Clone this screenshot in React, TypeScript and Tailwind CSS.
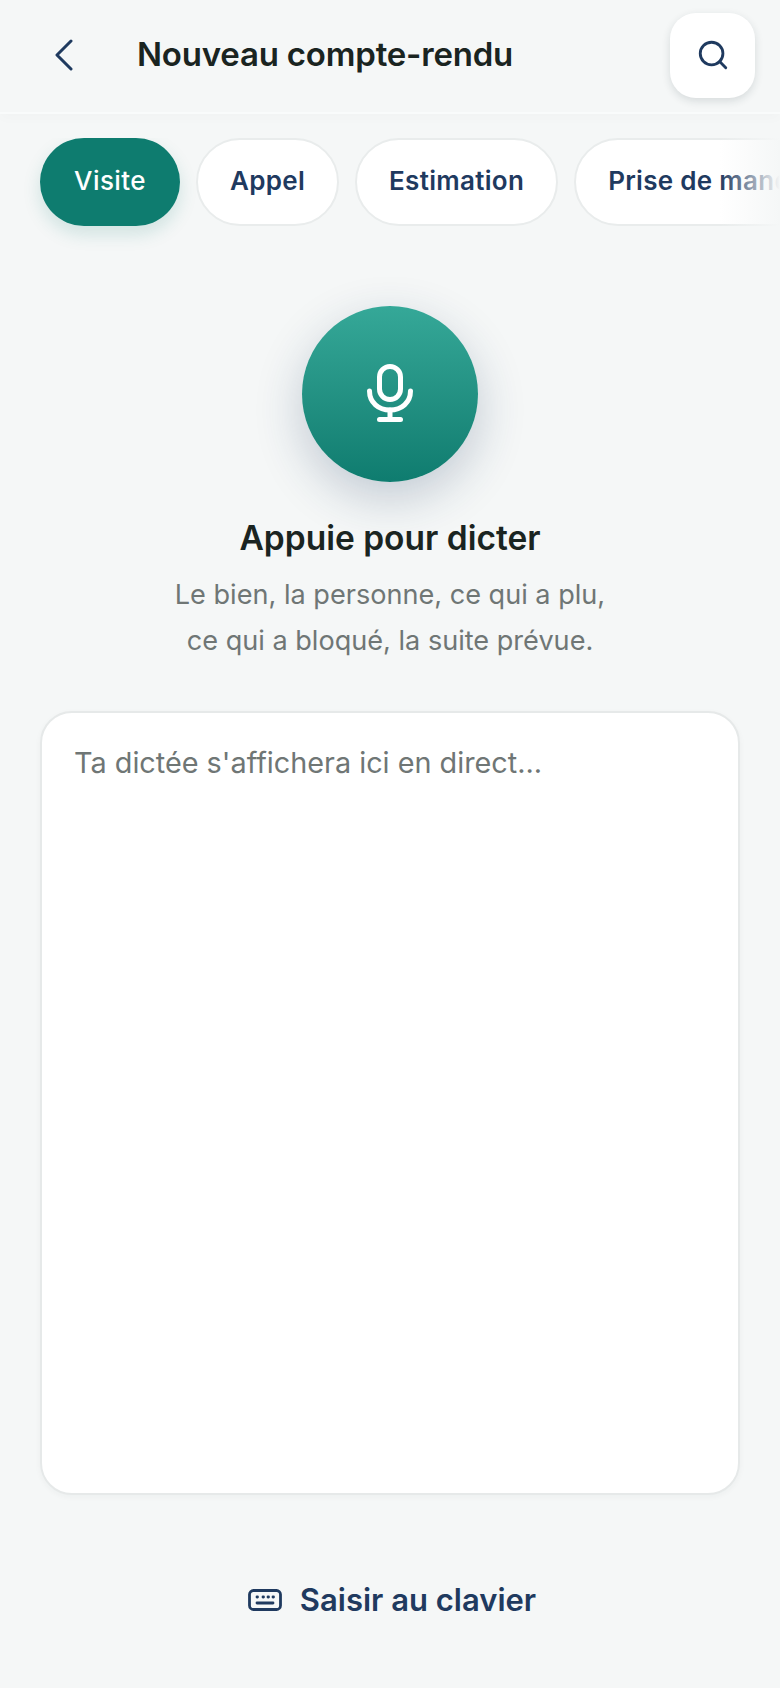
import { Search } from "lucide-react";

const chips = ["Visite", "Appel", "Estimation", "Prise de mandat"];

function BackIcon() {
  return (
    <svg width="20" height="32" viewBox="0 0 20 32" fill="none" stroke="#1f3a5f" strokeWidth="3" strokeLinecap="round" strokeLinejoin="round">
      <path d="M17 2 3 16l14 14" />
    </svg>
  );
}

function MicIcon() {
  return (
    <svg width="46" height="58" viewBox="0 0 46 58" fill="none" stroke="white" strokeWidth="5" strokeLinecap="round" strokeLinejoin="round">
      <rect x="12.500" y="2.500" width="21" height="33" rx="10.500" />
      <path d="M2.500 27c0 11.500 9 19 20.500 19s20.500-7.500 20.500-19" />
      <path d="M23 46v9" />
      <path d="M12.500 55.500h21" />
    </svg>
  );
}

function KeyboardIcon() {
  return (
    <svg width="34" height="22" viewBox="0 0 34 22" fill="none" stroke="#1f3a5f" strokeWidth="2.8" strokeLinecap="round">
      <rect x="1.500" y="1.500" width="31" height="19" rx="4" />
      <path d="M9 8h.5M15 8h.5M20 8h.5M25 8h.5" />
      <path d="M9 14h16" />
    </svg>
  );
}

export default function App() {
  return (
    <div className="flex h-[1688px] w-[780px] flex-col overflow-hidden bg-[#f5f7f7] font-['Inter',sans-serif]">
      <header className="flex h-[114px] shrink-0 items-center border-b-2 border-[#f9fbfb] pb-[2px] pl-[54px] pr-[25px] shadow-[0_4px_12px_rgba(30,50,60,0.02)]">
        <BackIcon />
        <h1 className="ml-[63px] flex-1 text-[33px] font-semibold tracking-[-0.2px] text-[#1a2421]">Nouveau compte-rendu</h1>
        <button className="flex h-[85px] w-[85px] items-center justify-center rounded-[26px] bg-white shadow-[0_3px_8px_rgba(30,50,60,0.14)]">
          <Search className="h-[34px] w-[34px] text-[#1f3a5f]" strokeWidth={2} />
        </button>
      </header>

      <div className="relative mt-[24px] h-[88px] shrink-0">
        <div className="flex h-[120px] gap-[16px] overflow-hidden pl-[40px]">
          {chips.map((chip, i) => (
            <span
              key={chip}
              className={
                i === 0
                  ? "flex h-[88px] w-[140px] shrink-0 items-center justify-center rounded-[44px] bg-[#0e7c6f] pb-[3px] text-[26px] font-medium tracking-[0.4px] text-white shadow-[0_8px_18px_rgba(14,124,111,0.16)]"
                  : "flex h-[88px] shrink-0 items-center rounded-[44px] border-2 border-[#e9ecec] bg-white px-[32px] pb-[3px] text-[26px] font-semibold tracking-[0.3px] text-[#1f3a5f]"
              }
            >
              {chip}
            </span>
          ))}
        </div>
        <div className="absolute right-0 top-0 h-[88px] w-[60px] bg-gradient-to-r from-[#f5f7f7]/0 to-[#f5f7f7]" />
      </div>

      <div className="mt-[80px] flex shrink-0 flex-col items-center">
        <button className="flex h-[176px] w-[176px] items-center justify-center rounded-full bg-gradient-to-b from-[#35a898] to-[#0e7c6f] pb-[2px] shadow-[0_16px_48px_rgba(31,58,95,0.24)]">
          <MicIcon />
        </button>
        <h2 className="mt-[36px] text-[33.5px] font-semibold leading-[40px] text-[#1a2421]">Appuie pour dicter</h2>
        <p className="mt-[14px] text-center text-[27.1px] leading-[45.5px] text-[#6f7675]">
          Le bien, la personne, ce qui a plu,
          <br />
          ce qui a bloqué, la suite prévue.
        </p>
      </div>

      <div className="mx-[40px] mt-[48px] h-[784px] shrink-0 rounded-[32px] border-2 border-[#e6e9e9] bg-white px-[32px] py-[30px] shadow-[0_2px_6px_rgba(30,50,60,0.04)]">
        <p className="text-[28.8px] leading-[40px] text-[#6f7675]">Ta dictée s'affichera ici en direct...</p>
      </div>

      <button className="mt-[82px] flex items-center justify-center gap-[18px] pl-[4px] text-[31px] font-semibold text-[#1f3a5f]">
        <KeyboardIcon />
        Saisir au clavier
      </button>
    </div>
  );
}
